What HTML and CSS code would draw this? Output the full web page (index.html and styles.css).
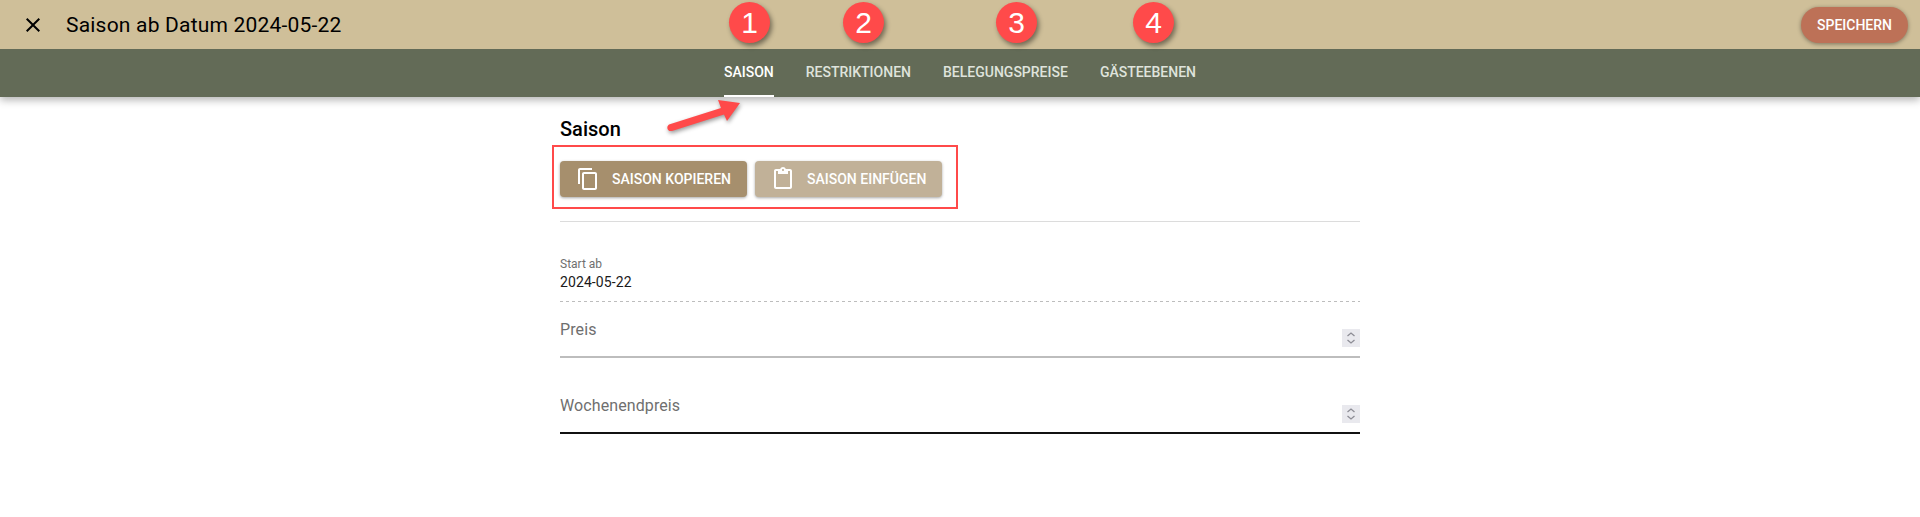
FILE: index.html
```html
<!DOCTYPE html>
<html lang="de">
<head>
    <meta charset="UTF-8">
    <title>Saison ab Datum 2024-05-22</title>
    <link rel="stylesheet" href="styles.css">
</head>
<body>
    <!-- Header -->
    <div class="header">
        <div class="toolbar">
            <svg class="close-icon" viewBox="0 0 24 24" width="24" height="24"><path d="M19 6.41 17.59 5 12 10.59 6.41 5 5 6.41 10.59 12 5 17.59 6.41 19 12 13.41 17.59 19 19 17.59 13.41 12z"/></svg>
            <div class="title">Saison ab Datum 2024-05-22</div>
            <button class="save-btn">Speichern</button>
        </div>
        <div class="tabs">
            <a class="tab active" href="#">Saison</a>
            <a class="tab" href="#">Restriktionen</a>
            <a class="tab" href="#">Belegungspreise</a>
            <a class="tab" href="#">Gästeebenen</a>
        </div>
    </div>

    <!-- Main Content -->
    <div class="content">
        <h2 class="section-title">Saison</h2>
        <div class="actions">
            <button class="action-btn">
                <svg viewBox="0 0 24 24" width="24" height="24"><path d="M16 1H4c-1.1 0-2 .9-2 2v14h2V3h12V1zm3 4H8c-1.1 0-2 .9-2 2v14c0 1.1.9 2 2 2h11c1.1 0 2-.9 2-2V7c0-1.1-.9-2-2-2zm0 16H8V7h11v14z"/></svg>
                Saison kopieren
            </button>
            <button class="action-btn disabled">
                <svg viewBox="0 0 24 24" width="24" height="24"><path d="M19 2h-4.18C14.4.84 13.3 0 12 0S9.6.84 9.18 2H5c-1.1 0-2 .9-2 2v16c0 1.1.9 2 2 2h14c1.1 0 2-.9 2-2V4c0-1.1-.9-2-2-2zm-7 0c.55 0 1 .45 1 1s-.45 1-1 1-1-.45-1-1 .45-1 1-1zm7 18H5V4h2v3h10V4h2v16z"/></svg>
                Saison einfügen
            </button>
        </div>
        <div class="divider"></div>

        <div class="readonly-field">
            <div class="small-label">Start ab</div>
            <div class="value">2024-05-22</div>
        </div>
        <div class="number-field">
            <span class="field-label">Preis</span>
            <span class="spinner"><svg viewBox="0 0 18 18" width="18" height="18"><path d="M5.5 7 9 4l3.5 3M5.5 11 9 14l3.5-3"/></svg></span>
        </div>
        <div class="number-field focused">
            <span class="field-label">Wochenendpreis</span>
            <span class="spinner"><svg viewBox="0 0 18 18" width="18" height="18"><path d="M5.5 7 9 4l3.5 3M5.5 11 9 14l3.5-3"/></svg></span>
        </div>
    </div>

    <!-- Annotations -->
    <div class="marker marker-1">1</div>
    <div class="marker marker-2">2</div>
    <div class="marker marker-3">3</div>
    <div class="marker marker-4">4</div>
    <div class="red-box"></div>
    <svg class="arrow" viewBox="0 0 90 40" width="90" height="40"><path d="M4 30.500 56 14 53 6 75 9 62 27 59 20.500 7 37C2 38 1 32.500 4 30.500z"/></svg>
</body>
</html>
```

FILE: styles.css
```css
/* Global Styles */
body {
    margin: 0;
    font-family: 'Roboto', sans-serif;
    background-color: #fff;
    color: #000;
}

/* Header */
.header {
    box-shadow: 0 3px 8px rgba(0, 0, 0, 0.3);
}
.toolbar {
    height: 49px;
    background-color: #cfbf99;
    display: flex;
    align-items: center;
    padding: 0 12px 0 21px;
}
.close-icon {
    margin-right: 21px;
}
.title {
    flex: 1;
    font-size: 21px;
    letter-spacing: 0.2px;
}
.save-btn {
    height: 36px;
    width: 107px;
    border: none;
    border-radius: 18px;
    background-color: #bd7157;
    color: #fff;
    font-family: inherit;
    font-size: 14px;
    font-weight: 500;
    text-transform: uppercase;
    padding: 0;
    box-shadow: 0 1px 4px rgba(0, 0, 0, 0.4);
}
.tabs {
    height: 48px;
    background-color: #636b57;
    display: flex;
    justify-content: center;
    gap: 32px;
}
.tab {
    display: flex;
    align-items: center;
    color: #dfe3dc;
    font-size: 14px;
    font-weight: 500;
    text-decoration: none;
    text-transform: uppercase;
    border-bottom: 2px solid transparent;
    box-sizing: border-box;
}
.tab.active {
    color: #fff;
    border-bottom-color: #fff;
}

/* Main Content */
.content {
    width: 800px;
    margin: 0 auto;
}
.section-title {
    margin: 22px 0 0;
    font-size: 20px;
    line-height: 21px;
    font-weight: 500;
}
.actions {
    display: flex;
    gap: 8px;
    margin-top: 21px;
}
.action-btn {
    width: 187px;
    height: 36px;
    border: none;
    border-radius: 4px;
    background-color: #a68f6d;
    color: #fff;
    font-family: inherit;
    font-size: 14px;
    font-weight: 500;
    text-transform: uppercase;
    display: flex;
    align-items: center;
    gap: 12px;
    padding: 0 0 0 16px;
    box-shadow: 0 1px 3px rgba(0, 0, 0, 0.35);
}
.action-btn svg {
    fill: #fff;
}
.action-btn.disabled {
    background-color: #c1b198;
}
.divider {
    height: 1px;
    background-color: #dcdcdc;
    margin-top: 24px;
}
.readonly-field {
    padding-top: 35px;
    height: 45px;
    background-image: linear-gradient(to right, #bdbdbd 3px, transparent 3px);
    background-size: 6px 1px;
    background-position: bottom left;
    background-repeat: repeat-x;
}
.small-label {
    font-size: 12px;
    line-height: 14px;
    color: #6f6f6f;
}
.value {
    font-size: 14px;
    line-height: 20px;
    color: #1a1a1a;
    margin-top: 1px;
    letter-spacing: 0.1px;
}
.number-field {
    height: 44px;
    display: flex;
    justify-content: space-between;
    padding-top: 10px;
    border-bottom: 2px solid #bdbdbd;
}
.number-field.focused {
    margin-top: 20px;
    border-bottom-color: #111;
}
.field-label {
    font-size: 16px;
    line-height: 36px;
    color: #6f6f6f;
    height: 36px;
    letter-spacing: 0.1px;
}
.spinner {
    width: 18px;
    height: 18px;
    margin-top: 17px;
    background-color: #e9e9ee;
}
.spinner svg {
    display: block;
    fill: none;
    stroke: #8d8d95;
    stroke-width: 1.3;
}

/* Annotations */
.marker {
    position: absolute;
    top: 2px;
    width: 41px;
    height: 41px;
    border-radius: 50%;
    background-color: #ff4a4a;
    color: #fff;
    font-family: 'Liberation Sans', sans-serif;
    font-size: 30px;
    line-height: 41px;
    text-align: center;
    box-shadow: 2px 3px 5px rgba(0, 0, 0, 0.45);
}
.marker-1 { left: 729px; }
.marker-2 { left: 843px; }
.marker-3 { left: 996px; }
.marker-4 { left: 1133px; }
.red-box {
    position: absolute;
    left: 552px;
    top: 145px;
    width: 406px;
    height: 64px;
    border: 2px solid #ff4a4a;
    box-sizing: border-box;
}
.arrow {
    position: absolute;
    left: 665px;
    top: 94px;
    fill: #ff4a4a;
    filter: drop-shadow(1px 2px 2px rgba(0, 0, 0, 0.4));
}
```
